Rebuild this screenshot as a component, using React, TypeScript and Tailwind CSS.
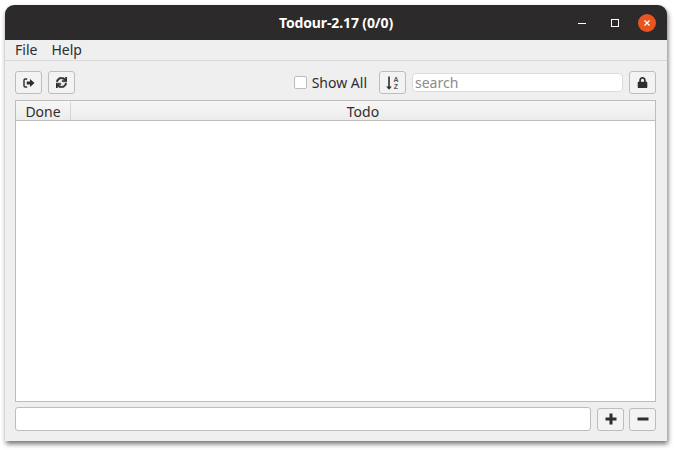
import { FaSync, FaLock } from "react-icons/fa";
import type { ReactNode } from "react";

function IconButton({ children }: { children: ReactNode }) {
  return (
    <button className="w-[27px] h-[23px] shrink-0 flex items-center justify-center rounded-[3px] border border-[#bdbdbd] bg-[#f3f3f3] text-[#2e2e2e]">
      {children}
    </button>
  );
}

function SignOutIcon() {
  return (
    <svg width="12" height="10" viewBox="0 0 13 11" fill="currentColor">
      <path d="M4.5 1H2.5A1.5 1.5 0 0 0 1 2.5v6A1.5 1.5 0 0 0 2.5 10h2" fill="none" stroke="currentColor" strokeWidth="1.6" />
      <path d="M4 3.8h3.6V1.2L12.6 5.5 7.6 9.8V7.2H4z" />
    </svg>
  );
}

function PlusIcon() {
  return (
    <svg width="12" height="12" viewBox="0 0 12 12" fill="currentColor">
      <path d="M4.5 0.5h3v4h4v3h-4v4h-3v-4h-4v-3h4z" />
    </svg>
  );
}

function MinusIcon() {
  return (
    <svg width="12" height="12" viewBox="0 0 12 12" fill="currentColor">
      <rect x="0.5" y="4.5" width="11" height="3" />
    </svg>
  );
}

function SortIcon() {
  return (
    <span className="flex items-center gap-[1px]">
      <svg width="6" height="14" viewBox="0 0 6 14" fill="currentColor">
        <path d="M2.2 0.5h1.6v10h2L3 13.7 0.2 10.5h2z" />
      </svg>
      <span className="flex flex-col items-center text-[7px] leading-[7px] font-bold text-[#555] font-['Liberation_Sans',sans-serif]">
        <span>A</span>
        <span>Z</span>
      </span>
    </span>
  );
}

export default function App() {
  return (
    <div className="w-[675px] h-[450px] bg-white pl-[5px] pt-[5px] font-['Noto_Sans',sans-serif] overflow-hidden">
      <div className="w-[662px] h-[436px] flex flex-col rounded-t-[9px] bg-[#efefef] shadow-[1px_3px_5px_rgba(0,0,0,0.55)] overflow-hidden">
        {/* Title bar */}
        <div className="h-[35px] shrink-0 bg-[#2c2a2a] relative flex items-center justify-center text-white text-[14px] font-bold tracking-[-0.12px]">
          <span>Todour-2.17 (0/0)</span>
          <div className="absolute right-[11px] top-[9px] flex items-center gap-[19px]">
            <div className="w-[8px] h-[1px] bg-white mr-[6px]" />
            <div className="w-[8px] h-[8px] border border-white" />
            <div className="w-[18px] h-[18px] rounded-full bg-[#e95420] flex items-center justify-center">
              <svg width="6" height="6" viewBox="0 0 6 6" stroke="white" strokeWidth="1.2">
                <path d="M0.5 0.5L5.5 5.5M5.5 0.5L0.5 5.5" />
              </svg>
            </div>
          </div>
        </div>

        {/* Menu */}
        <div className="h-[21px] shrink-0 flex items-center gap-[14px] pl-[10px] pb-[1px] border-b border-[#d9d9d9] text-[14px] text-[#2e2e2e]">
          <span>File</span>
          <span>Help</span>
        </div>

        {/* Toolbar */}
        <div className="h-[39px] shrink-0 flex items-center gap-[6px] pl-[10px] pr-[11px] pt-[4px]">
          <IconButton><SignOutIcon /></IconButton>
          <IconButton><FaSync size={11} stroke="currentColor" strokeWidth={24} /></IconButton>
          <div className="flex-1" />
          <div className="w-[13px] h-[13px] bg-white border border-[#bdbdbd] rounded-[2px] mr-[-1px]" />
          <span className="text-[14px] text-[#2e2e2e] mr-[6px]">Show All</span>
          <IconButton><SortIcon /></IconButton>
          <div className="w-[211px] h-[19px] bg-white border border-[#dcdcdc] rounded-[4px] flex items-center pl-[2px] text-[14px] text-[#8a8a8a]">
            search
          </div>
          <IconButton><FaLock size={11} /></IconButton>
        </div>

        {/* Table */}
        <div className="ml-[10px] mr-[11px] h-[302px] shrink-0 flex flex-col border border-[#bdbdbd] bg-white">
          <div className="h-[20px] shrink-0 flex border-b border-[#bdbdbd] pt-[1px] bg-gradient-to-b from-[#f7f7f7] to-[#ececec] text-[14px] text-[#2e2e2e]">
            <div className="w-[55px] flex items-center justify-center border-r border-[#d5d5d5]">Done</div>
            <div className="flex-1 flex items-center justify-center">Todo</div>
          </div>
        </div>

        {/* Bottom row */}
        <div className="flex items-center pl-[10px] pr-[11px] mt-[5px]">
          <div className="flex-1 h-[24px] bg-white border border-[#bdbdbd] rounded-[3px] mr-[6px]" />
          <IconButton><PlusIcon /></IconButton>
          <div className="w-[5px] shrink-0" />
          <IconButton><MinusIcon /></IconButton>
        </div>
      </div>
    </div>
  );
}
